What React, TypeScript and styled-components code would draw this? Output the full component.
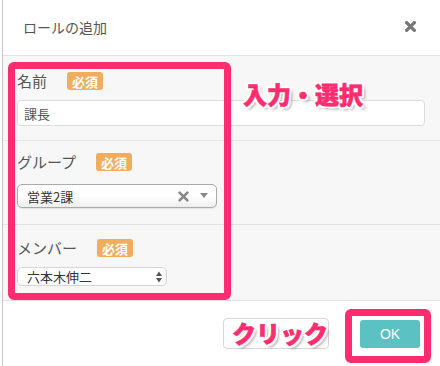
import React from "react";
import styled, { createGlobalStyle } from "styled-components";

const Global = createGlobalStyle`
  html, body { margin: 0; padding: 0; background: #fff; }
  body { width: 440px; height: 366px; overflow: hidden; font-family: "Noto Sans CJK JP", "Noto Sans", sans-serif; }
  * { box-sizing: border-box; }
`;

const PINK = "#ff2d6f";

const Root = styled.div`
  position: relative;
  width: 440px;
  height: 366px;
`;

const Modal = styled.div`
  margin-left: 2px;
  border-left: 1px solid #c4c4c4;
  height: 366px;
  display: flex;
  flex-direction: column;
  background: #fff;
`;

const Header = styled.div`
  height: 56px;
  border-bottom: 1px solid #e3e3e3;
  display: flex;
  align-items: center;
  justify-content: space-between;
  padding: 0 24px 2px 20px;
`;

const Title = styled.h4`
  margin: 0;
  font-size: 14px;
  font-weight: 400;
  color: #555;
`;

const Close = styled.button`
  border: 0;
  background: none;
  padding: 0;
  width: 11px;
  height: 11px;
  display: flex;
  cursor: pointer;
`;

const Body = styled.div`
  background: #f7f7f7;
`;

const Group = styled.div<{ $pt: number; $gap: number; $pb: number }>`
  padding: ${(p) => p.$pt}px 15px ${(p) => p.$pb}px 14px;
  border-bottom: 1px solid #e3e3e3;
  display: flex;
  flex-direction: column;
  align-items: flex-start;
  gap: ${(p) => p.$gap}px;
`;

const LabelRow = styled.div`
  height: 18px;
  display: flex;
  align-items: center;
`;

const Label = styled.label`
  font-size: 15px;
  color: #555;
  line-height: 18px;
`;

const Badge = styled.span`
  margin-left: 20px;
  width: 36px;
  height: 18px;
  border-radius: 3px;
  background: #f0ad5e;
  color: #fff;
  font-size: 13px;
  font-weight: 700;
  display: flex;
  align-items: center;
  justify-content: center;
`;

const TextInput = styled.div`
  width: 100%;
  height: 26px;
  border: 1px solid #dcdcdc;
  border-radius: 4px;
  background: #fff;
  font-size: 13px;
  color: #555;
  display: flex;
  align-items: center;
  padding-left: 6px;
`;

const Select2 = styled.div`
  width: 200px;
  height: 24px;
  border: 1px solid #aaa;
  border-radius: 5px;
  background: linear-gradient(#ffffff 0%, #ffffff 50%, #eeeeee 100%);
  box-shadow: 0 1px 1px rgba(0, 0, 0, 0.08);
  display: flex;
  align-items: center;
  padding: 0 8px 0 9px;
  font-size: 13px;
  color: #333;
`;

const SelectText = styled.span`
  flex: 1;
`;

const NativeSelect = styled.div`
  width: 150px;
  height: 19px;
  border: 1px solid #d4d4d4;
  border-radius: 5px;
  background: #fff;
  display: flex;
  align-items: center;
  padding: 0 4px 0 9px;
  font-size: 13px;
  color: #333;
`;

const Footer = styled.div`
  flex: 1;
  display: flex;
  align-items: center;
  justify-content: flex-end;
  gap: 31px;
  padding-right: 20px;
`;

const GhostButton = styled.button`
  width: 106px;
  height: 31px;
  border: 1px solid #d6d6d6;
  border-radius: 4px;
  background: #fff;
`;

const OkButton = styled.button`
  width: 60px;
  height: 28px;
  border: 0;
  border-radius: 3px;
  background: #5cc1c3;
  color: #fff;
  font-size: 14px;
  font-family: "Liberation Sans", Arial, sans-serif;
`;

const Frame = styled.div<{ $x: number; $y: number; $w: number; $h: number }>`
  position: absolute;
  left: ${(p) => p.$x}px;
  top: ${(p) => p.$y}px;
  width: ${(p) => p.$w}px;
  height: ${(p) => p.$h}px;
  border: 7px solid ${PINK};
  border-radius: 6px;
  pointer-events: none;
`;

const Note = styled.div<{ $x: number; $y: number }>`
  position: absolute;
  left: ${(p) => p.$x}px;
  top: ${(p) => p.$y}px;
  font-size: 24px;
  font-weight: 900;
  color: ${PINK};
  line-height: 30px;
  white-space: nowrap;
  -webkit-text-stroke: 0.6px ${PINK};
  text-shadow:
    -2px -2px 0 #fff, 2px -2px 0 #fff, -2px 2px 0 #fff, 2px 2px 0 #fff,
    0 -2px 0 #fff, 0 2px 0 #fff, -2px 0 0 #fff, 2px 0 0 #fff,
    3px 3px 3px rgba(0, 0, 0, 0.35);
`;

const XIcon = ({ size, color, w }: { size: number; color: string; w: number }) => (
  <svg width={size} height={size} viewBox="0 0 10 10">
    <path d="M1.5 1.5 L8.5 8.5 M8.5 1.5 L1.5 8.5" stroke={color} strokeWidth={w} strokeLinecap="round" />
  </svg>
);

export default function App() {
  return (
    <Root>
      <Global />
      <Modal>
        <Header>
          <Title>ロールの追加</Title>
          <Close aria-label="close">
            <XIcon size={11} color="#777" w={3} />
          </Close>
        </Header>
        <Body>
          <Group $pt={16} $gap={10} $pb={14}>
            <LabelRow>
              <Label>名前</Label>
              <Badge>必須</Badge>
            </LabelRow>
            <TextInput>課長</TextInput>
          </Group>
          <Group $pt={12} $gap={13} $pb={16}>
            <LabelRow>
              <Label>グループ</Label>
              <Badge>必須</Badge>
            </LabelRow>
            <Select2>
              <SelectText>営業2課</SelectText>
              <XIcon size={11} color="#888" w={2.4} />
              <svg width="8" height="6" viewBox="0 0 8 6" style={{ marginLeft: 11 }}>
                <path d="M0 0 L8 0 L4 5 Z" fill="#888" />
              </svg>
            </Select2>
          </Group>
          <Group $pt={14} $gap={10} $pb={14}>
            <LabelRow>
              <Label>メンバー</Label>
              <Badge>必須</Badge>
            </LabelRow>
            <NativeSelect>
              <SelectText>六本木伸二</SelectText>
              <svg width="6" height="12" viewBox="0 0 6 12">
                <path d="M0 5 L6 5 L3 0.5 Z M0 7 L6 7 L3 11.5 Z" fill="#555" />
              </svg>
            </NativeSelect>
          </Group>
        </Body>
        <Footer>
          <GhostButton />
          <OkButton>OK</OkButton>
        </Footer>
      </Modal>
      <Frame $x={8} $y={62} $w={223} $h={238} />
      <Frame $x={345} $y={309} $w={86} $h={54} />
      <Note $x={243} $y={79}>入力・選択</Note>
      <Note $x={232} $y={318}>クリック</Note>
    </Root>
  );
}
